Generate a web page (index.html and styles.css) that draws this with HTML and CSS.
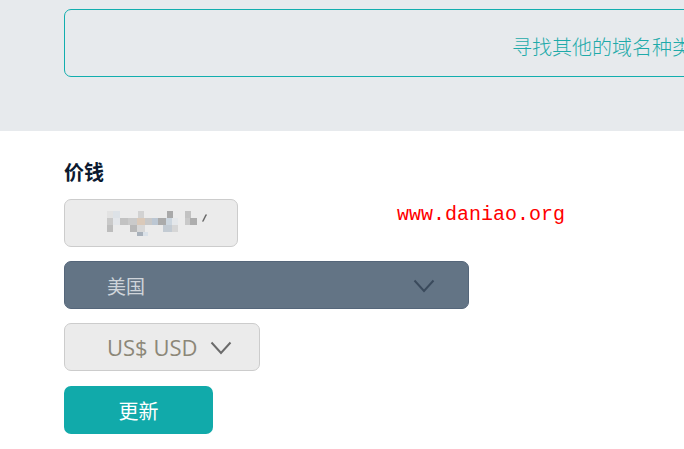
FILE: index.html
```html
<!DOCTYPE html>
<html lang="zh">
<head>
<meta charset="utf-8">
<link rel="stylesheet" href="styles.css">
</head>
<body>
<section class="top">
  <div class="search-box">寻找其他的域名种类</div>
</section>
<section class="price">
  <h2 class="title">价钱</h2>
  <div class="field">
    <svg class="mosaic" width="110" height="28" viewBox="0 0 110 28">
      <rect x="2" y="1" width="6" height="7" fill="#e2e2e2"/>
      <rect x="8" y="1" width="7" height="7" fill="#dde2e7"/>
      <rect x="33" y="1" width="6" height="7" fill="#d2d2d2"/>
      <rect x="62" y="1" width="6" height="7" fill="#a9a9a9"/>
      <rect x="80" y="1" width="6" height="7" fill="#c2c2c2"/>
      <rect x="2" y="8" width="6" height="7" fill="#c9c9c9"/>
      <rect x="8" y="8" width="7" height="7" fill="#e3e6ea"/>
      <rect x="15" y="8" width="8" height="7" fill="#c2c2c2"/>
      <rect x="23" y="8" width="9" height="7" fill="#cacaca"/>
      <rect x="32" y="8" width="8" height="7" fill="#dac9b9"/>
      <rect x="40" y="8" width="7" height="7" fill="#c8c8c8"/>
      <rect x="47" y="8" width="6" height="7" fill="#bcc7d3"/>
      <rect x="53" y="8" width="8" height="7" fill="#ababab"/>
      <rect x="61" y="8" width="6" height="7" fill="#ccd6df"/>
      <rect x="67" y="8" width="6" height="7" fill="#e4e7ea"/>
      <rect x="80" y="8" width="5" height="7" fill="#c9c9c9"/>
      <rect x="85" y="8" width="7" height="7" fill="#adadad"/>
      <rect x="2" y="15" width="6" height="7" fill="#bdbdbd"/>
      <rect x="25" y="15" width="7" height="7" fill="#b8b8b8"/>
      <rect x="32" y="15" width="8" height="7" fill="#d8d8d8"/>
      <rect x="58" y="15" width="9" height="7" fill="#c3cbd3"/>
      <rect x="67" y="15" width="6" height="7" fill="#d6d6d6"/>
      <rect x="32" y="22" width="6" height="4" fill="#a8b1bb"/>
      <rect x="38" y="22" width="5" height="4" fill="#dae1e8"/>
      <path d="M98 11 L101 5" stroke="#6a6a6a" stroke-width="1.6" stroke-linecap="round"/>
    </svg>
  </div>
  <div class="select select-country">
    <span>美国</span>
    <svg class="chev" width="22" height="14" viewBox="0 0 22 14"><path d="M1.5 1.5 L11 12 L20.5 1.5" fill="none" stroke="currentColor" stroke-width="2"/></svg>
  </div>
  <div class="select select-currency">
    <span>US$ USD</span>
    <svg class="chev" width="22" height="14" viewBox="0 0 22 14"><path d="M1.5 1.5 L11 12 L20.5 1.5" fill="none" stroke="currentColor" stroke-width="2"/></svg>
  </div>
  <button class="update">更新</button>
  <div class="watermark">www.daniao.org</div>
</section>
</body>
</html>
```
FILE: styles.css
```css
* { box-sizing: border-box; }
html, body { margin: 0; padding: 0; }
body {
  width: 684px;
  height: 449px;
  overflow: hidden;
  background: #ffffff;
  font-family: "Noto Sans CJK SC", "Noto Sans", sans-serif;
}
.top {
  background: #e7eaed;
  height: 131px;
  padding: 9px 0 0 64px;
  overflow: hidden;
}
.search-box {
  width: 1076px;
  height: 68px;
  border: 1px solid #12aeae;
  border-radius: 7px;
  display: flex;
  align-items: center;
  justify-content: center;
  padding-top: 6px;
  color: #1eaaaa;
  font-size: 20px;
  font-weight: 300;
  white-space: nowrap;
}
.price {
  position: relative;
  padding: 29px 0 0 64px;
  display: flex;
  flex-direction: column;
  align-items: flex-start;
}
.title {
  margin: 0;
  font-size: 20px;
  line-height: 24px;
  font-weight: 700;
  color: #0c1a30;
}
.field {
  margin-top: 15px;
  width: 174px;
  height: 48px;
  background: #ebebeb;
  border: 1px solid #cccccc;
  border-radius: 7px;
  display: flex;
  align-items: center;
  padding-left: 40px;
}
.mosaic { display: block; margin-top: 1px; }
.select {
  margin-top: 14px;
  height: 48px;
  border-radius: 7px;
  display: flex;
  align-items: center;
  padding-left: 42px;
  font-size: 19px;
  white-space: nowrap;
}
.select-country {
  width: 405px;
  background: #637485;
  border: 1px solid #55667a;
  color: #cfd4da;
  justify-content: space-between;
  padding-right: 33px;
}
.select-country .chev { color: #3a4a5c; margin-top: 1px; }
.select-currency {
  width: 196px;
  background: #ebebeb;
  border: 1px solid #cccccc;
  color: #8c8778;
  font-family: "Open Sans", "Noto Sans", sans-serif;
  font-size: 22px;
  gap: 13px;
}
.select-currency .chev { color: #6b6b6b; margin-top: 2px; }
.update {
  margin-top: 15px;
  width: 149px;
  height: 48px;
  border: none;
  border-radius: 7px;
  background: #11aaaa;
  color: #ffffff;
  font-family: "Noto Sans CJK SC", sans-serif;
  font-size: 20px;
  padding: 0;
  cursor: pointer;
}
.watermark {
  position: absolute;
  left: 397px;
  top: 72px;
  font-family: "Liberation Mono", "DejaVu Sans Mono", monospace;
  font-size: 20px;
  line-height: 24px;
  color: #ff0000;
}
```
